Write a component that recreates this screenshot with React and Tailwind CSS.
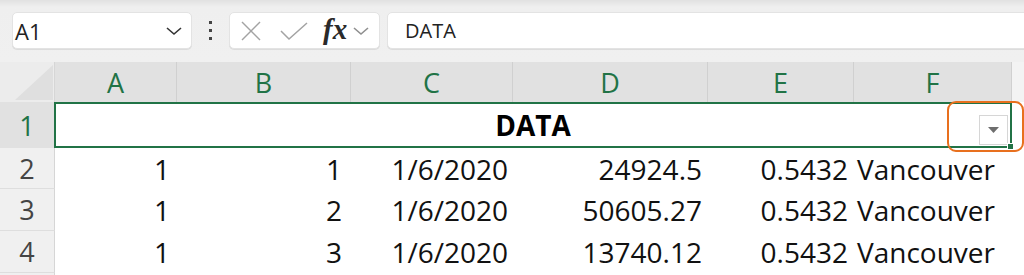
import React from 'react';

const GREEN = '#217346';

const rows = [
  { n: 2, a: '1', b: '1', c: '1/6/2020', d: '24924.5', e: '0.5432', f: 'Vancouver' },
  { n: 3, a: '1', b: '2', c: '1/6/2020', d: '50605.27', e: '0.5432', f: 'Vancouver' },
  { n: 4, a: '1', b: '3', c: '1/6/2020', d: '13740.12', e: '0.5432', f: 'Vancouver' },
];

const cols = ['A', 'B', 'C', 'D', 'E', 'F'];

function Chevron({ className, color = '#333', w = 18 }) {
  return (
    <svg width={w} height="10" viewBox="0 0 18 10" className={className}>
      <polyline points="2,2 9,8 16,2" fill="none" stroke={color} strokeWidth="1.6" />
    </svg>
  );
}

function Toolbar() {
  return (
    <div className="h-[62px] flex items-start pt-3 pl-3 overflow-hidden bg-[linear-gradient(to_bottom,#e1e1e1_0px,#efefef_7px,#f0f0f0_100%)]">
      {/* Name box */}
      <div className="w-[180px] h-[37px] bg-white rounded-[5px] border border-[#e3e3e3] shadow-[0_1px_0_#dcdcdc] flex items-center pl-[2px] pr-[8px]">
        <span className="flex-1 text-[22px] text-[#222] leading-none">A1</span>
        <Chevron />
      </div>

      {/* Dots */}
      <div className="w-[37px] h-[37px] flex flex-col items-center justify-center gap-[5px]">
        <span className="w-[3px] h-[3px] bg-[#444]" />
        <span className="w-[3px] h-[3px] bg-[#444]" />
        <span className="w-[3px] h-[3px] bg-[#444]" />
      </div>

      {/* Cancel / enter / fx */}
      <div className="w-[151px] h-[37px] bg-white rounded-[5px] border border-[#e3e3e3] shadow-[0_1px_0_#dcdcdc] flex items-center pl-[10px]">
        <svg width="22" height="20" viewBox="0 0 22 20" className="mt-[1px]">
          <line x1="2" y1="1" x2="20" y2="19" stroke="#a3a3a3" strokeWidth="1.5" />
          <line x1="20" y1="1" x2="2" y2="19" stroke="#a3a3a3" strokeWidth="1.5" />
        </svg>
        <svg width="28" height="20" viewBox="0 0 28 20" className="ml-[18px] mt-[1px]">
          <polyline points="1,10 9,18 27,2" fill="none" stroke="#a3a3a3" strokeWidth="1.5" />
        </svg>
        <span className="ml-[15px] text-[29px] italic font-semibold text-[#2a2a2a] leading-none font-['Liberation_Serif',serif] -mt-[3px]">
          fx
        </span>
        <Chevron className="ml-[5px]" color="#8f8f8f" w={18} />
      </div>

      {/* Formula bar */}
      <div className="ml-[7px] flex-1 -mr-[20px] h-[37px] bg-white rounded-[5px] border border-[#e3e3e3] shadow-[0_1px_0_#dcdcdc] flex items-center pl-[17px]">
        <span className="text-[20px] text-[#222] leading-none">DATA</span>
      </div>
    </div>
  );
}

function Sheet() {
  const grid = 'grid grid-cols-[55px_122px_174px_162px_195px_146px_158px_1fr]';
  return (
    <div className="bg-white">
      {/* Column header */}
      <div className={`${grid} h-[40px] bg-[#f0f0f0]`}>
        <div className="relative bg-[#ececec] border-r border-[#d6d6d6]">
          <svg width="55" height="40" className="absolute inset-0">
            <polygon points="53,3 53,38 15,38" fill="#dfdfdf" />
          </svg>
        </div>
        {cols.map((c) => (
          <div
            key={c}
            className="bg-[#e1e1e1] border-r border-[#d0d0d0] flex items-center justify-center text-[27px] leading-none"
            style={{ color: GREEN }}
          >
            {c}
          </div>
        ))}
        <div className="bg-[#f3f3f3]" />
      </div>

      {/* Row 1 (merged, selected) */}
      <div className="relative flex h-[46px]">
        <div className="w-[55px] shrink-0 bg-[#e1e1e1] border-r border-[#d0d0d0] flex items-center justify-center text-[27px] leading-none text-[#217346]">
          1
        </div>
        <div className="relative -ml-px w-[958px] shrink-0 border-2 border-[#217346] flex items-center justify-center">
          <span className="text-[28px] font-bold text-black leading-none">DATA</span>
          <div className="absolute right-[2px] bottom-[1px] w-[29px] h-[30px] bg-white border border-[#d6d6d6] flex items-center justify-center">
            <svg width="11" height="6" viewBox="0 0 11 6">
              <polygon points="0,0 11,0 5.5,6" fill="#6e6e6e" />
            </svg>
          </div>
          <div className="absolute -right-[4px] -bottom-[4px] w-[7px] h-[7px] bg-[#217346] border border-white" />
        </div>
        <div className="flex-1 bg-white" />
        {/* orange highlight */}
        <div className="absolute left-[947px] top-[-1px] w-[77px] h-[51px] rounded-[9px] border-2 border-[#e8701e]" />
      </div>

      {/* Data rows */}
      {rows.map((r, i) => (
        <div key={r.n} className={`${grid} ${i === 0 ? 'h-[41px]' : 'h-[42px]'} text-[28px] leading-none text-[#111]`}>
          <div className="bg-[#f0f0f0] border-r border-[#d6d6d6] border-b border-b-[#dedede] flex items-center justify-center text-[27px] text-[#444]">
            {r.n}
          </div>
          <div className="flex items-center justify-end pr-[7px]">{r.a}</div>
          <div className="flex items-center justify-end pr-[9px]">{r.b}</div>
          <div className="flex items-center justify-end pr-[5px]">{r.c}</div>
          <div className="flex items-center justify-end pr-[6px]">{r.d}</div>
          <div className="flex items-center justify-end pr-[6px]">{r.e}</div>
          <div className="flex items-center pl-[3px] whitespace-nowrap">{r.f}</div>
          <div />
        </div>
      ))}
      <div className="grid grid-cols-[55px_1fr] h-[10px]">
        <div className="bg-[#f0f0f0] border-r border-[#d6d6d6]" />
        <div />
      </div>
    </div>
  );
}

export default function App() {
  return (
    <div className="w-[1024px] h-[275px] overflow-hidden bg-white font-['Open_Sans',sans-serif]">
      <Toolbar />
      <Sheet />
    </div>
  );
}
